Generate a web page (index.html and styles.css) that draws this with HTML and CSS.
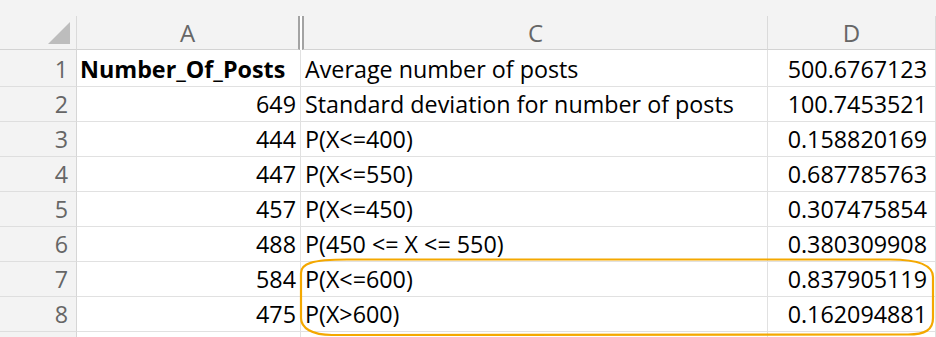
FILE: index.html
```html
<!DOCTYPE html>
<html lang="en">
<head>
<meta charset="utf-8">
<title>Sheet</title>
<link rel="stylesheet" href="styles.css">
</head>
<body>
<div class="sheet">
  <div class="topstrip"></div>
  <div class="grid">
    <div class="hd corner">
      <svg class="selall" width="22" height="22" viewBox="0 0 22 22"><polygon points="0,22 22,22 22,0" fill="#bdbdbd"/></svg>
    </div>
    <div class="hd col colA">A</div>
    <div class="hd col colC">C</div>
    <div class="hd col colD">D</div>

    <div class="rn">1</div>
    <div class="c left bold">Number_Of_Posts</div>
    <div class="c left cc">Average number of posts</div>
    <div class="c right cd">500.6767123</div>

    <div class="rn">2</div>
    <div class="c right ca">649</div>
    <div class="c left cc">Standard deviation for number of posts</div>
    <div class="c right cd">100.7453521</div>

    <div class="rn">3</div>
    <div class="c right ca">444</div>
    <div class="c left cc">P(X&lt;=400)</div>
    <div class="c right cd">0.158820169</div>

    <div class="rn">4</div>
    <div class="c right ca">447</div>
    <div class="c left cc">P(X&lt;=550)</div>
    <div class="c right cd">0.687785763</div>

    <div class="rn">5</div>
    <div class="c right ca">457</div>
    <div class="c left cc">P(X&lt;=450)</div>
    <div class="c right cd">0.307475854</div>

    <div class="rn">6</div>
    <div class="c right ca">488</div>
    <div class="c left cc">P(450 &lt;= X &lt;= 550)</div>
    <div class="c right cd">0.380309908</div>

    <div class="rn">7</div>
    <div class="c right ca">584</div>
    <div class="c left cc">P(X&lt;=600)</div>
    <div class="c right cd">0.837905119</div>

    <div class="rn">8</div>
    <div class="c right ca">475</div>
    <div class="c left cc">P(X&gt;600)</div>
    <div class="c right cd">0.162094881</div>

    <div class="rn"></div>
    <div class="c"></div>
    <div class="c"></div>
    <div class="c"></div>
  </div>
  <svg class="mark" width="936" height="337" viewBox="0 0 936 337">
    <path d="M347 259.5 L890 259.5 C916 259.5 933 264 933 277 L933 318 C933 330 925 334.5 908 334.5 L332 335 C312 335 301 328 301 318 L301 273 C301 264 311 259.5 347 259.5 Z" fill="none" stroke="#f4a800" stroke-width="2.2"/>
  </svg>
</div>
</body>
</html>
```

FILE: styles.css
```css
* { box-sizing: border-box; }

html, body {
  margin: 0;
  padding: 0;
  background: #ffffff;
}

.sheet {
  position: relative;
  width: 936px;
  height: 337px;
  overflow: hidden;
  font-family: "Open Sans", "Noto Sans", sans-serif;
  font-size: 23.3px;
  color: #000;
}

.topstrip {
  height: 16px;
  background: #f3f3f3;
}

.grid {
  display: grid;
  grid-template-columns: 77px 224px 467px 168px;
  grid-template-rows: 34px 37px repeat(8, 35px);
}

.hd {
  background: #f3f3f3;
  border-bottom: 1px solid #d3d3d3;
  border-right: 1px solid #dadada;
  color: #666666;
  font-size: 24px;
  line-height: 24px;
  display: flex;
  align-items: flex-end;
  justify-content: center;
  padding-bottom: 4px;
}

.corner {
  justify-content: flex-end;
  padding-right: 6px;
  padding-bottom: 5px;
}

.selall { display: block; }

.colA {
  border-right: 2px solid #a3a3a3;
  margin-right: 1px;
}

.colC {
  border-left: 2px solid #a3a3a3;
  margin-left: 1px;
}

.rn {
  background: #f3f3f3;
  border-right: 1px solid #d6d6d6;
  border-bottom: 1px solid #dedede;
  color: #666666;
  line-height: 23px;
  display: flex;
  align-items: flex-end;
  justify-content: flex-end;
  padding: 0 8px 5px 0;
}

.c {
  border-right: 1px solid #e1e1e1;
  border-bottom: 1px solid #e1e1e1;
  line-height: 23px;
  display: flex;
  align-items: flex-end;
  padding-bottom: 5px;
  white-space: nowrap;
}

.left { justify-content: flex-start; padding-left: 4px; }
.right { justify-content: flex-end; }
.bold { font-weight: 700; padding-left: 3px; }
.ca { padding-right: 4px; }
.cd { padding-right: 8px; }

.mark {
  position: absolute;
  left: 0;
  top: 0;
  pointer-events: none;
}
```
